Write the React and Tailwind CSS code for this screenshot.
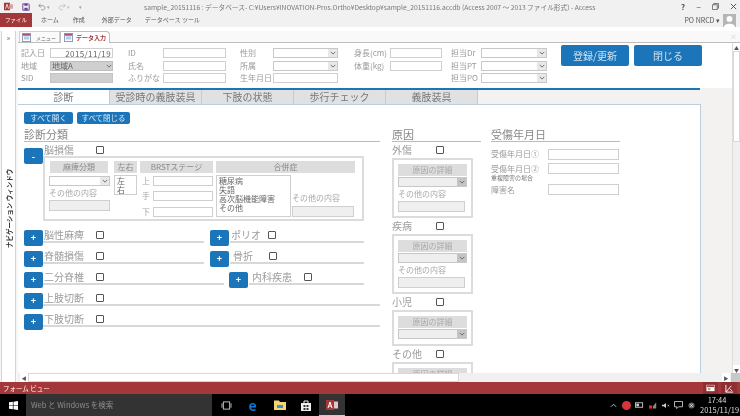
const F = { fontFamily: '"Noto Sans CJK JP", "Liberation Sans", sans-serif' };

function Caret() {
  return (
    <svg viewBox="0 0 8 8" className="w-[6px] h-[6px]">
      <path d="M1 2.5 L4 5.5 L7 2.5" fill="none" stroke="#666" strokeWidth="1.2" />
    </svg>
  );
}

function Select({ className = "", disabled = false }) {
  return (
    <div className={`flex justify-end border border-[#c8c8c8] ${disabled ? "bg-[#eeeeee]" : "bg-white"} ${className}`}>
      <div className={`w-[9px] flex items-center justify-center ${disabled ? "bg-[#c4c4c4]" : "bg-[#e8e8e8]"}`}>
        <Caret />
      </div>
    </div>
  );
}

function Input({ className = "", children }) {
  return <div className={`border border-[#cfcfcf] bg-white ${className}`}>{children}</div>;
}

function Box() {
  return <div className="w-[8px] h-[8px] border border-[#555] rounded-[1px] bg-white" />;
}

function Plus({ minus = false, className = "" }) {
  return (
    <div className={`w-[19px] h-[16px] shrink-0 bg-[#1b75b8] rounded-[2px] text-white flex items-center justify-center text-[9px] font-bold leading-none ${className}`}>
      {minus ? "-" : "+"}
    </div>
  );
}

function HeaderRow({ label, w1, children }) {
  return (
    <div className="flex items-center h-[12.5px]">
      <div className="text-[8px] text-[#9a9a9a] leading-none whitespace-nowrap" style={{ width: w1 }}>{label}</div>
      {children}
    </div>
  );
}

function Rail({ label, underline, labelW = 52, indent = 1 }) {
  return (
    <div className={`h-[11px] border-b-2 border-[#d8d8d8] ${underline}`}>
      <div className="flex items-center h-[6px]" style={{ paddingLeft: indent }}>
        <span className="text-[10px] leading-none text-[#9b9b9b] whitespace-nowrap" style={{ width: labelW }}>{label}</span>
        <Box />
      </div>
    </div>
  );
}

function CauseBox({ other, tall }) {
  return (
    <div className={`w-[81px] border-2 border-[#dcdcdc] bg-white px-[4px] pt-[4px] ${tall ? "h-[60px]" : "h-[36px]"}`}>
      <div className="h-[12px] bg-[#dddddd] text-[8px] text-[#a8a8a8] text-center leading-[12px]">原因の詳細</div>
      <Select disabled className="h-[10px] mt-[1px]" />
      {other ? (
        <>
          <div className="text-[8px] text-[#a8a8a8] leading-[12px] mt-[1px]">その他の内容</div>
          <div className="h-[11px] border border-[#cfcfcf] bg-[#efefef] mt-[1px] mr-[2px]" />
        </>
      ) : null}
    </div>
  );
}

function Cause({ label, other, tall }) {
  return (
    <div>
      <div className="flex items-center h-[16px]">
        <span className="w-[44px] text-[10px] text-[#9b9b9b] leading-none whitespace-nowrap">{label}</span>
        <Box />
      </div>
      <CauseBox other={other} tall={tall} />
    </div>
  );
}

function TabBtn({ children, active }) {
  return (
    <div className={`w-[92px] h-[14px] text-[10px] leading-[14px] text-center text-[#777] border-r border-[#b9cfe0] ${active ? "bg-white" : "bg-[#e1e1e1]"}`}>
      {children}
    </div>
  );
}

function FormIcon() {
  return (
    <svg viewBox="0 0 10 10" className="w-[9px] h-[9px] shrink-0">
      <rect x="0.5" y="0.5" width="9" height="9" fill="#fff" stroke="#8d8fb5" />
      <rect x="1" y="1" width="8" height="2" fill="#b04a6a" />
      <rect x="2" y="4" width="6" height="1" fill="#6fa8d0" />
      <rect x="2" y="6" width="6" height="1" fill="#6fa8d0" />
    </svg>
  );
}

function Tray({ children }) {
  return <div className="w-[13px] flex justify-center items-center">{children}</div>;
}

export default function App() {
  return (
    <div style={F} className="w-[740px] h-[416px] overflow-hidden flex flex-col bg-white blur-[0.35px]">
      {/* title bar */}
      <div className="h-[13px] bg-[#f1f1f1] flex items-center relative shrink-0">
        <svg viewBox="0 0 12 12" className="w-[9px] h-[9px] ml-[4px]">
          <rect x="0" y="1" width="8" height="10" fill="#a4373a" />
          <rect x="7" y="3" width="5" height="6" fill="#d9a3a4" />
          <path d="M2 9 L4 3 L6 9" stroke="#fff" strokeWidth="1" fill="none" />
        </svg>
        <svg viewBox="0 0 10 10" className="w-[8px] h-[8px] ml-[9px]">
          <path d="M1 1 H8 L9 2 V9 H1 Z" fill="none" stroke="#6b3fa0" strokeWidth="1.2" />
          <rect x="3" y="1" width="4" height="2.5" fill="#6b3fa0" />
          <rect x="3" y="6" width="4" height="3" fill="#6b3fa0" />
        </svg>
        <svg viewBox="0 0 10 10" className="w-[8px] h-[8px] ml-[8px]">
          <path d="M3 1 L1 3.5 L3.5 5.5 M1 3.5 H6 C9.5 3.5 9.5 8.5 6 8.5 H4" fill="none" stroke="#888" strokeWidth="1" />
        </svg>
        <span className="ml-[1px] text-[5px] text-[#999] leading-none">▾</span>
        <svg viewBox="0 0 10 10" className="w-[8px] h-[8px] ml-[8px]">
          <path d="M7 1 L9 3.5 L6.5 5.5 M9 3.5 H4 C0.5 3.5 0.5 8.5 4 8.5 H6" fill="none" stroke="#bbb" strokeWidth="1" />
        </svg>
        <span className="ml-[1px] text-[5px] text-[#bbb] leading-none">▾</span>
        <span className="ml-[9px] text-[5px] text-[#999] leading-none">▾</span>
        <span className="absolute left-[144px] top-[2px] text-[6.7px] leading-[10px] text-[#777] whitespace-nowrap">
          sample_20151116 : データベース- C:¥Users¥INOVATION-Pros.Ortho¥Desktop¥sample_20151116.accdb (Access 2007 ～ 2013 ファイル形式) - Access
        </span>
        <div className="ml-auto flex items-center gap-[11px] mr-[3px] text-[9px] leading-none text-[#555]">
          <span className="font-bold text-[8px]">?</span>
          <span>–</span>
          <svg viewBox="0 0 8 8" className="w-[7px] h-[7px]"><path d="M2 2 V0.5 H7.5 V6 H6 M0.5 2 H6 V7.5 H0.5 Z" fill="none" stroke="#666" /></svg>
          <svg viewBox="0 0 8 8" className="w-[7px] h-[7px]"><path d="M1 1 L7 7 M7 1 L1 7" stroke="#444" strokeWidth="1" /></svg>
        </div>
      </div>
      {/* ribbon tabs */}
      <div className="h-[14px] bg-[#f1f1f1] flex items-center shrink-0">
        <div className="w-[32px] h-full bg-[#a4373a] text-white text-[5.5px] leading-[14px] text-center">ファイル</div>
        <div className="flex text-[6px] text-[#555] leading-none whitespace-nowrap">
          <span className="ml-[9px]">ホーム</span>
          <span className="ml-[14px]">作成</span>
          <span className="ml-[17px]">外部データ</span>
          <span className="ml-[13px]">データベース ツール</span>
        </div>
        <div className="ml-auto flex items-center mr-[4px]">
          <span className="text-[7px] text-[#555] leading-none">PO NRCD ▾</span>
          <div className="ml-[3px] w-[13px] h-[13px] bg-[#b5b5b5] flex items-end justify-center overflow-hidden">
            <svg viewBox="0 0 12 12" className="w-[13px] h-[13px]"><circle cx="6" cy="4.5" r="2.7" fill="#fff" /><path d="M1 12 C1 8 11 8 11 12 Z" fill="#fff" /></svg>
          </div>
        </div>
      </div>
      <div className="h-[4px] bg-white shrink-0" />

      {/* main */}
      <div className="flex flex-1 min-h-0 bg-[#f6f6f6]">
        {/* nav pane */}
        <div className="w-[15px] shrink-0 border-x border-[#d4d4d4] ml-[1px] mr-[2px] bg-white relative">
          <div className="text-[7px] leading-none text-[#555] text-center mt-[3px]">»</div>
          <div className="absolute left-[2px] top-[149px] w-[11px] h-[68px] text-[6.5px] leading-[11px] font-bold text-[#333] whitespace-nowrap text-center [writing-mode:vertical-rl] [text-orientation:sideways] rotate-180">
            ナビゲーション ウィンドウ
          </div>
        </div>

        <div className="flex-1 min-w-0 flex flex-col">
          {/* document tabs */}
          <div className="h-[12px] bg-[#f9f9f9] flex border-b border-[#bdbdbd] shrink-0 pl-[1px]">
            <div className="w-[41px] flex items-center gap-[5px] pl-[2px] h-[11px] border-x border-t border-[#d0d0d0] bg-[#fafafa]">
              <FormIcon />
              <span className="text-[5px] text-[#666] leading-none whitespace-nowrap">メニュー</span>
            </div>
            <div className="w-[50px] flex items-center gap-[3px] pl-[3px] h-[12px] border-x border-t border-[#bdbdbd] bg-white rounded-tr-[4px]">
              <FormIcon />
              <span className="text-[6px] text-[#a4373a] font-bold leading-none whitespace-nowrap">データ入力</span>
            </div>
            <div className="ml-auto mr-[3px] text-[7px] text-[#ccc] leading-[11px]">×</div>
          </div>

          <div className="flex-1 min-h-0 flex">
            <div className="flex-1 min-w-0 flex flex-col">
              <div className="flex-1 min-h-0 overflow-hidden bg-[#f3f2f0] flex flex-col">
                {/* form header */}
                <div className="h-[45px] shrink-0 bg-white flex pt-[3px] pl-[3px] w-[714px]">
                  <div className="w-[107px] pt-[1px]">
                    <HeaderRow label="記入日" w1="29px">
                      <Input className="w-[63px] h-[10px] text-[8px] tracking-[0.4px] leading-[9px] text-right pr-[1px] text-[#666]">2015/11/19</Input>
                    </HeaderRow>
                    <HeaderRow label="地域" w1="29px">
                      <div className="w-[63px] h-[10px] bg-[#cfcfcf] border border-[#bdbdbd] flex justify-between items-center">
                        <span className="text-[8px] leading-none text-[#666] pl-[1px]">地域A</span>
                        <div className="w-[7px] flex justify-center"><Caret /></div>
                      </div>
                    </HeaderRow>
                    <HeaderRow label="SID" w1="29px">
                      <div className="w-[63px] h-[10px] bg-[#cfcfcf] border border-[#c4c4c4]" />
                    </HeaderRow>
                  </div>
                  <div className="w-[112px] pt-[1px]">
                    <HeaderRow label="ID" w1="35px"><Input className="w-[63px] h-[10px]" /></HeaderRow>
                    <HeaderRow label="氏名" w1="35px"><Input className="w-[63px] h-[10px]" /></HeaderRow>
                    <HeaderRow label="ふりがな" w1="35px"><Input className="w-[63px] h-[10px]" /></HeaderRow>
                  </div>
                  <div className="w-[114px] pt-[1px]">
                    <HeaderRow label="性別" w1="33px"><Select className="w-[65px] h-[10px]" /></HeaderRow>
                    <HeaderRow label="所属" w1="33px"><Select className="w-[65px] h-[10px]" /></HeaderRow>
                    <HeaderRow label="生年月日" w1="33px"><Input className="w-[65px] h-[10px]" /></HeaderRow>
                  </div>
                  <div className="w-[97px] pt-[1px]">
                    <HeaderRow label="身長(cm)" w1="36px"><Input className="w-[52px] h-[10px]" /></HeaderRow>
                    <HeaderRow label="体重(kg)" w1="36px"><Input className="w-[52px] h-[10px]" /></HeaderRow>
                  </div>
                  <div className="w-[110px] pt-[1px]">
                    <HeaderRow label="担当Dr" w1="30px"><Select className="w-[66px] h-[10px]" /></HeaderRow>
                    <HeaderRow label="担当PT" w1="30px"><Select className="w-[66px] h-[10px]" /></HeaderRow>
                    <HeaderRow label="担当PO" w1="30px"><Select className="w-[66px] h-[10px]" /></HeaderRow>
                  </div>
                  <div className="w-[68px] h-[21px] mt-[-1px] bg-[#1b75b8] rounded-[2px] text-[#cfe2f0] text-[10px] leading-[21px] text-center">登録/更新</div>
                  <div className="w-[68px] h-[21px] mt-[-1px] ml-[5px] bg-[#1b75b8] rounded-[2px] text-[#cfe2f0] text-[10px] leading-[21px] text-center">閉じる</div>
                </div>

                {/* tab control */}
                <div className="w-[682px] h-[2px] bg-[#1b75b8] shrink-0" />
                <div className="flex shrink-0">
                  <TabBtn active>診断</TabBtn>
                  <TabBtn>受診時の義肢装具</TabBtn>
                  <TabBtn>下肢の状態</TabBtn>
                  <TabBtn>歩行チェック</TabBtn>
                  <TabBtn>義肢装具</TabBtn>
                </div>

                {/* tab page */}
                <div className="w-[683px] flex-1 min-h-0 bg-white border-r border-t border-[#b9cfe0] pl-[6px] pt-[7px] overflow-hidden">
                  <div className="flex gap-[4px]">
                    <div className="w-[49px] h-[12px] bg-[#1b75b8] rounded-[2px] text-[7.5px] leading-[12px] text-center text-[#d6e6f2]">すべて開く</div>
                    <div className="w-[53px] h-[12px] bg-[#1b75b8] rounded-[2px] text-[7.5px] leading-[12px] text-center text-[#d6e6f2]">すべて閉じる</div>
                  </div>

                  <div className="flex mt-[3px]">
                    {/* left */}
                    <div className="w-[356px] shrink-0">
                      <div className="text-[11px] leading-[14px] text-[#888] h-[15px] border-b border-[#9cc4e0]">診断分類</div>
                      <div className="flex items-start mt-[1px]">
                        <Plus minus className="mt-[5px]" />
                        <div className="flex-1">
                          <div className="flex items-center h-[13px] pl-[1px]">
                            <span className="w-[52px] text-[10px] leading-none text-[#9b9b9b]">脳損傷</span>
                            <Box />
                          </div>
                          <div className="w-[321px] h-[65px] border-2 border-[#dcdcdc] bg-white flex pl-[4px] pt-[3px] text-[8px] text-[#a8a8a8]">
                            <div className="w-[61px]">
                              <div className="ml-[1px] w-[58px] h-[12px] bg-[#dddddd] text-center leading-[12px] text-[#8a8a8a]">麻痺分類</div>
                              <Select className="w-[61px] h-[10px] mt-[3px]" />
                              <div className="leading-[12px] mt-[1px] whitespace-nowrap">その他の内容</div>
                              <div className="w-[61px] h-[11px] bg-[#efefef] border border-[#cfcfcf] mt-[1px]" />
                            </div>
                            <div className="ml-[4px] w-[23px]">
                              <div className="h-[12px] bg-[#dddddd] text-center leading-[12px] text-[#8a8a8a]">左右</div>
                              <div className="h-[20px] border border-[#cfcfcf] mt-[2px] pl-[2px] text-[#666] leading-[9px]">左<br />右</div>
                            </div>
                            <div className="ml-[3px] w-[73px]">
                              <div className="h-[12px] bg-[#dddddd] text-center leading-[12px] text-[#8a8a8a] whitespace-nowrap">BRSTステージ</div>
                              {["上", "手", "下"].map((t) => (
                                <div key={t} className="flex items-center h-[15.5px] first:mt-[3px]">
                                  <span className="w-[13px] pl-[2px]">{t}</span>
                                  <Input className="flex-1 h-[10px]" />
                                </div>
                              ))}
                            </div>
                            <div className="ml-[3px] w-[139px]">
                              <div className="h-[12px] bg-[#dddddd] text-center leading-[12px] text-[#8a8a8a]">合併症</div>
                              <div className="flex mt-[2px]">
                                <div className="w-[75px] h-[42px] border border-[#cfcfcf] pl-[2px] text-[#666] leading-[9px] whitespace-nowrap">糖尿病<br />失語<br />高次脳機能障害<br />その他</div>
                                <div className="ml-[1px] pt-[17px]">
                                  <div className="leading-[12px] whitespace-nowrap">その他の内容</div>
                                  <div className="w-[62px] h-[11px] bg-[#efefef] border border-[#cfcfcf] mt-[2px]" />
                                </div>
                              </div>
                            </div>
                          </div>
                        </div>
                      </div>

                      <div className="flex mt-[6px]">
                        <div className="w-[186px]">
                          <div className="flex items-center h-[21px]"><Plus /><Rail label="脳性麻痺" underline="flex-1 mr-[6px]" /></div>
                          <div className="flex items-center h-[21px]"><Plus /><Rail label="脊髄損傷" underline="flex-1 mr-[6px]" /></div>
                        </div>
                        <div className="w-[154px]">
                          <div className="flex items-center h-[21px]"><Plus /><Rail label="ポリオ" labelW={37} underline="flex-1 ml-[1px]" /></div>
                          <div className="flex items-center h-[21px]"><Plus /><Rail label="骨折" labelW={36} indent={3} underline="flex-1 ml-[1px]" /></div>
                        </div>
                      </div>
                      <div className="flex items-center h-[21px]">
                        <Plus />
                        <Rail label="二分脊椎" underline="w-[181px]" />
                        <div className="ml-[5px] flex items-center">
                          <Plus />
                          <div className="ml-[1px] w-[115px]"><Rail label="内科疾患" labelW={52} indent={3} underline="w-full" /></div>
                        </div>
                      </div>
                      <div className="flex items-center h-[21px]"><Plus /><Rail label="上肢切断" underline="flex-1" /></div>
                      <div className="flex items-center h-[21px]"><Plus /><Rail label="下肢切断" underline="flex-1" /></div>
                    </div>

                    {/* middle */}
                    <div className="ml-[12px] w-[89px] shrink-0">
                      <div className="text-[11px] leading-[14px] text-[#888] h-[15px] border-b border-[#9cc4e0]">原因</div>
                      <Cause label="外傷" other tall />
                      <Cause label="疾病" other tall />
                      <Cause label="小児" />
                      <Cause label="その他" tall />
                    </div>

                    {/* right */}
                    <div className="ml-[10px] w-[129px] shrink-0">
                      <div className="text-[11px] leading-[14px] text-[#888] h-[15px] border-b border-[#9cc4e0]">受傷年月日</div>
                      <div className="flex items-start mt-[7px] h-[14px] text-[8px] text-[#999]">
                        <span className="w-[57px] leading-[9px]">受傷年月日①</span>
                        <Input className="w-[71px] h-[11px]" />
                      </div>
                      <div className="flex items-start h-[21px] text-[8px] text-[#999]">
                        <div className="w-[57px] leading-[11px]">
                          受傷年月日②
                          <div className="text-[6px] leading-[7px] text-[#777] whitespace-nowrap">重複障害の場合</div>
                        </div>
                        <Input className="w-[71px] h-[11px]" />
                      </div>
                      <div className="flex items-start text-[8px] text-[#999]">
                        <span className="w-[57px] leading-[11px]">障害名</span>
                        <Input className="w-[71px] h-[11px]" />
                      </div>
                    </div>
                  </div>
                </div>
              </div>
            </div>

            {/* vertical scrollbar */}
            <div className="w-[8px] shrink-0 bg-[#f0f0f0] flex flex-col border-l border-[#ddd]">
              <div className="h-[8px] flex items-center justify-center text-[5px] leading-none text-[#555] bg-white">▲</div>
              <div className="h-[91px] bg-white border border-[#d8d8d8]" />
              <div className="flex-1" />
              <div className="h-[8px] flex items-center justify-center text-[5px] leading-none text-[#555] bg-white">▼</div>
            </div>
          </div>

          {/* horizontal scrollbar */}
          <div className="h-[9px] shrink-0 bg-[#f0f0f0] flex items-center">
            <div className="w-[8px] h-[9px] ml-[2px] bg-white text-[5px] leading-[9px] text-center text-[#555]">◀</div>
            <div className="w-[431px] h-[9px] bg-white border border-[#d8d8d8]" />
            <div className="ml-auto mr-[1px] w-[8px] h-[9px] bg-white text-[5px] leading-[9px] text-center text-[#555]">▶</div>
            <div className="w-[9px] h-[9px] bg-[#c8c8c8]" />
          </div>
        </div>
      </div>

      {/* status bar */}
      <div className="h-[12px] shrink-0 bg-[#a4373a] flex items-center text-white text-[6.5px] leading-none">
        <span className="ml-[3px]">フォーム ビュー</span>
        <div className="ml-auto flex h-full">
          <div className="w-[15px] h-full bg-[#8f2f32] flex items-center justify-center">
            <svg viewBox="0 0 10 8" className="w-[9px] h-[8px]"><rect x="0.5" y="0.5" width="9" height="7" fill="#fff" /><rect x="1" y="1" width="8" height="2" fill="#a4373a" /><rect x="2" y="4" width="3" height="2.5" fill="#c98" /></svg>
          </div>
          <div className="w-[16px] ml-[3px] mr-[3px] h-full bg-[#8f2f32] flex items-center justify-center">
            <svg viewBox="0 0 10 10" className="w-[9px] h-[9px]"><path d="M1 1 V9 H9 M1 9 L7 2" stroke="#fff" fill="none" /><path d="M5 5 L8 8" stroke="#fcc" /></svg>
          </div>
        </div>
      </div>

      {/* taskbar */}
      <div className="h-[22px] shrink-0 bg-black flex items-center text-white">
        <div className="w-[26px] flex justify-center">
          <svg viewBox="0 0 10 10" className="w-[9px] h-[9px]"><path d="M0 1.5 L4.3 .9 V4.7 H0 Z M5 .8 L10 0 V4.7 H5 Z M0 5.3 H4.3 V9.1 L0 8.5 Z M5 5.3 H10 V10 L5 9.2 Z" fill="#fff" /></svg>
        </div>
        <div className="w-[186px] h-full bg-[#333] text-[7.5px] leading-[22px] pl-[5px] text-[#8d8d8d]">Web と Windows を検索</div>
        <div className="w-[26px] flex justify-center ml-[1px]">
          <svg viewBox="0 0 12 10" className="w-[11px] h-[9px]"><rect x="2.5" y="1" width="7" height="8" fill="none" stroke="#ccc" /><path d="M1 2.5 V7.5 M11 2.5 V7.5" stroke="#ccc" /></svg>
        </div>
        <div className="w-[27px] flex justify-center text-[14px] font-bold text-[#0f78d4] leading-none">e</div>
        <div className="w-[27px] flex justify-center">
          <svg viewBox="0 0 12 10" className="w-[12px] h-[10px]"><path d="M0 0.5 H5 L6 2 H12 V10 H0 Z" fill="#f3d673" /><rect x="3" y="5" width="6" height="3" fill="#3a8fd0" /></svg>
        </div>
        <div className="w-[26px] flex justify-center">
          <svg viewBox="0 0 10 11" className="w-[10px] h-[11px]"><path d="M0 3 H10 V11 H0 Z" fill="#eee" /><path d="M3 3 V1 H7 V3" stroke="#eee" fill="none" /><rect x="2.5" y="5" width="2" height="2" fill="#333" /><rect x="5.5" y="5" width="2" height="2" fill="#333" /><rect x="2.5" y="8" width="2" height="2" fill="#333" /><rect x="5.5" y="8" width="2" height="2" fill="#333" /></svg>
        </div>
        <div className="w-[26px] h-full bg-[#333] border-b border-[#ccc] flex justify-center items-center">
          <svg viewBox="0 0 12 10" className="w-[12px] h-[10px]"><rect x="6" y="1.5" width="6" height="7" fill="#e8c4c4" /><rect x="0" y="0" width="8" height="10" fill="#a4373a" /><path d="M2 8 L4 2 L6 8 M3 6 H5" stroke="#fff" fill="none" /></svg>
        </div>
        <div className="ml-auto flex items-center mr-[6px] text-[#ccc]">
          <Tray><svg viewBox="0 0 8 5" className="w-[7px] h-[5px]"><path d="M1 4 L4 1 L7 4" stroke="#ccc" fill="none" /></svg></Tray>
          <Tray><div className="w-[9px] h-[9px] rounded-full bg-[#d8353a]" /></Tray>
          <Tray><svg viewBox="0 0 10 6" className="w-[9px] h-[6px]"><rect x="0.5" y="0.5" width="8" height="5" fill="none" stroke="#ccc" /><rect x="1.5" y="1.5" width="3" height="3" fill="#ccc" /></svg></Tray>
          <Tray><svg viewBox="0 0 10 9" className="w-[8px] h-[8px]"><rect x="0" y="5" width="4" height="4" fill="#e8262a" /><path d="M5 6 L9 1 V9 H5 Z" fill="#888" /></svg></Tray>
          <Tray><svg viewBox="0 0 10 8" className="w-[8px] h-[7px]"><path d="M0 3 H2 L5 1 V7 L2 5 H0 Z" fill="#ccc" /><path d="M7 3 L9 5 M9 3 L7 5" stroke="#ccc" /></svg></Tray>
          <Tray><svg viewBox="0 0 10 9" className="w-[9px] h-[8px]"><path d="M0.5 0.5 H9.5 V6.5 H5 L3 8.5 V6.5 H0.5 Z" fill="none" stroke="#ccc" /></svg></Tray>
          <Tray><svg viewBox="0 0 8 8" className="w-[7px] h-[7px]"><circle cx="4" cy="4" r="3.5" fill="#666" /><path d="M2.5 2.5 L5.5 5.5 M5.5 2.5 L2.5 5.5" stroke="#ddd" /></svg></Tray>
          <div className="w-[34px] text-center text-[7.5px] leading-[10px] text-[#ddd] ml-[2px]">17:44<br />2015/11/19</div>
        </div>
      </div>
    </div>
  );
}
